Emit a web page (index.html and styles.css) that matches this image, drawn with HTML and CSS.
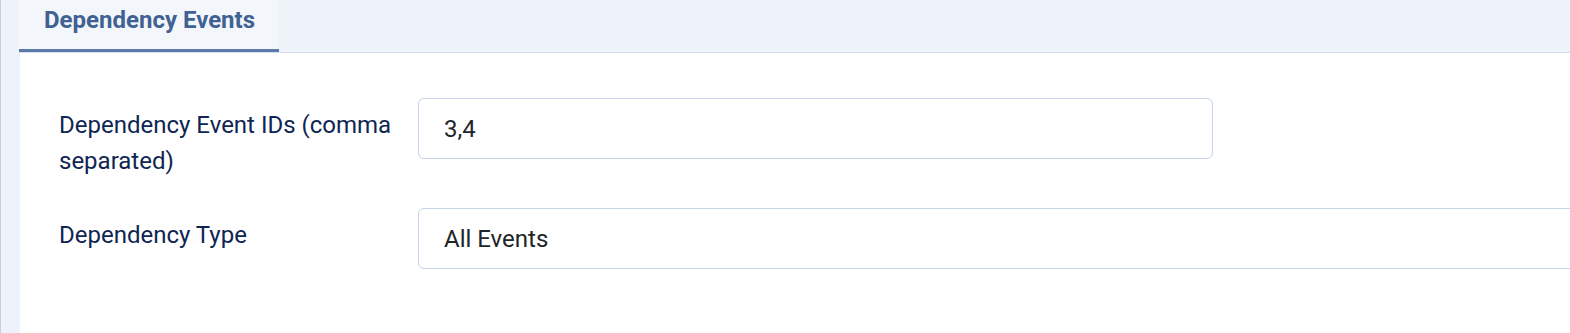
FILE: index.html
```html
<!DOCTYPE html>
<html lang="en">
<head>
<meta charset="utf-8">
<title>Dependency Events</title>
<link rel="stylesheet" href="styles.css">
</head>
<body>
<div class="page">
  <div class="main">
    <div class="tabs">
      <div class="tab active">Dependency Events</div>
    </div>
    <div class="panel">
      <div class="form-row">
        <label class="form-label" for="dep-ids">Dependency Event IDs (comma separated)</label>
        <input class="form-input input-md" id="dep-ids" type="text" value="3,4">
      </div>
      <div class="form-row">
        <label class="form-label" for="dep-type">Dependency Type</label>
        <div class="form-input input-wide" id="dep-type">All Events</div>
      </div>
    </div>
  </div>
</div>
</body>
</html>
```

FILE: styles.css
```css
* { box-sizing: border-box; }
html, body {
  margin: 0;
  padding: 0;
  height: 100%;
  overflow: hidden;
}
body {
  background: #eef2fa;
  font-family: Roboto, "Liberation Sans", sans-serif;
}
.page {
  min-height: 100%;
  border-left: 1px solid #c9ced9;
  padding-left: 18px;
  display: flex;
}
.main {
  flex: 1;
  display: flex;
  flex-direction: column;
  min-width: 0;
}
.tabs {
  display: flex;
  border-bottom: 1px solid #d6dfee;
  background: #eef3fa;
}
.tab {
  height: 52px;
  padding: 5px 24px 0 25px;
  font-size: 24px;
  font-weight: 700;
  color: #3f6292;
  line-height: 30px;
  background: #f3f6fb;
  border-bottom: 3px solid #5b7aa6;
}
.panel {
  flex: 1;
  background: #ffffff;
  margin-left: 1px;
  padding: 45px 0 0 39px;
  overflow: hidden;
}
.form-row {
  display: flex;
  align-items: flex-start;
  gap: 19px;
  margin-bottom: 29px;
}
.form-label {
  flex: 0 0 340px;
  padding-top: 9px;
  font-size: 24px;
  line-height: 36px;
  color: #0f2552;
}
.form-input {
  flex: 0 0 auto;
  height: 61px;
  border: 1px solid #c6d3e8;
  border-radius: 6px;
  padding: 0 25px;
  font-family: Roboto, "Liberation Sans", sans-serif;
  font-size: 24px;
  color: #212529;
  background: #fff;
  display: flex;
  align-items: center;
  outline: none;
}
.input-md { width: 795px; }
.input-wide { width: 1300px; }
```
